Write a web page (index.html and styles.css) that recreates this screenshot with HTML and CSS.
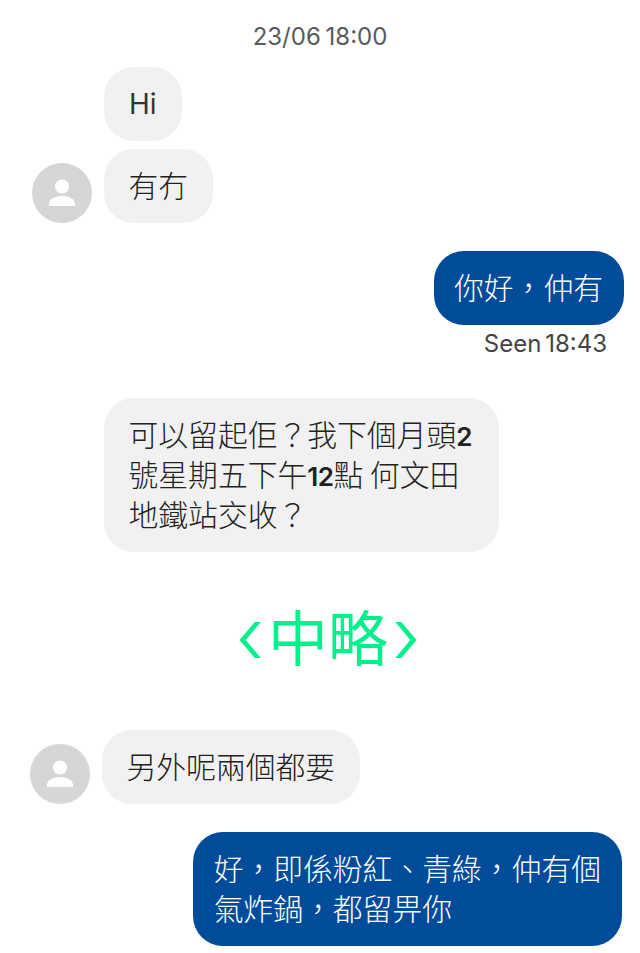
FILE: index.html
```html
<!DOCTYPE html>
<html lang="zh-Hant">
<head>
<meta charset="utf-8">
<title>Chat</title>
<link rel="stylesheet" href="styles.css">
</head>
<body>
<main class="chat">
  <p class="stamp">23/06 18:00</p>
  <section class="group">
    <div class="bubble in latin">Hi</div>
    <div class="row">
      <svg class="avatar" viewBox="0 0 60 60" aria-hidden="true"><circle cx="30" cy="30" r="30" fill="#d6d6d6"/><circle cx="30" cy="23.5" r="7" fill="#fff"/><path d="M17 43v-2c0-5 6-8 13-8s13 3 13 8v2z" fill="#fff"/></svg>
      <div class="bubble in">有冇</div>
    </div>
  </section>
  <section class="group-out">
    <div class="bubble out">你好&#xFF0C;仲有</div>
    <p class="seen">Seen 18:43</p>
  </section>
  <section class="long">
    <div class="bubble in wide">可以留起佢&#xFF1F;我下個月頭<b>2</b><br>號星期五下午<b>12</b>點 何文田<br>地鐵站交收&#xFF1F;</div>
  </section>
  <div class="omit"><span class="chev">‹</span><span class="omit-text">中略</span><span class="chev">›</span></div>
  <section class="group-in2">
    <div class="row">
      <svg class="avatar" viewBox="0 0 60 60" aria-hidden="true"><circle cx="30" cy="30" r="30" fill="#d6d6d6"/><circle cx="30" cy="23.5" r="7" fill="#fff"/><path d="M17 43v-2c0-5 6-8 13-8s13 3 13 8v2z" fill="#fff"/></svg>
      <div class="bubble in">另外呢兩個都要</div>
    </div>
  </section>
  <section class="group-out2">
    <div class="bubble out">好&#xFF0C;即係粉紅、青綠&#xFF0C;仲有個<br>氣炸鍋&#xFF0C;都留畀你</div>
  </section>
</main>
</body>
</html>
```
FILE: styles.css
```css
html, body {
  margin: 0;
  padding: 0;
  background: #fff;
}
.chat {
  display: flex;
  flex-direction: column;
  font-family: "Noto Sans CJK TC", sans-serif;
  font-weight: 300;
  font-size: 29.8px;
  line-height: 40px;
  color: #222;
}
.stamp {
  margin: 20px 0 13px;
  text-align: center;
  font-family: Inter, sans-serif;
  font-weight: 400;
  font-size: 24px;
  line-height: 34px;
  color: #5a5a5a;
  word-spacing: -2px;
}
.group {
  display: flex;
  flex-direction: column;
  gap: 8px;
  align-items: flex-start;
  padding-left: 32px;
}
.group > .bubble {
  margin-left: 72px;
}
.row {
  display: flex;
  align-items: flex-end;
  gap: 12px;
}
.avatar {
  width: 60px;
  height: 60px;
  flex: none;
}
.bubble {
  padding: 15px 25px 19px 24.5px;
  border-radius: 30px;
  white-space: nowrap;
}
.bubble b {
  font-family: Inter, sans-serif;
  font-size: 26px;
  font-weight: 600;
  line-height: 1;
  letter-spacing: -0.5px;
}
.wide {
  padding-right: 27px;
}
.latin {
  font-family: Inter, sans-serif;
  font-size: 28px;
  font-weight: 400;
  color: #333;
  padding: 17px 25px;
}
.in {
  background: #f1f1f1;
}
.out {
  background: #004c9b;
  color: #fff;
  padding-left: 20.5px;
  padding-right: 21px;
}
.group-out {
  display: flex;
  flex-direction: column;
  align-items: flex-end;
  margin-top: 28px;
  padding-right: 16px;
}
.seen {
  margin: 0;
  padding-right: 17px;
  font-family: Inter, sans-serif;
  font-weight: 400;
  font-size: 24px;
  line-height: 38px;
  color: #444;
  word-spacing: -3px;
}
.long {
  display: flex;
  margin-top: 35px;
  padding-left: 104px;
}
.omit {
  height: 178px;
  display: flex;
  align-items: center;
  justify-content: center;
  gap: 4px;
  color: #00f08c;
  padding: 0 0 12px 16px;
  box-sizing: border-box;
}
.omit-text {
  font-size: 60px;
  font-weight: 400;
  line-height: 60px;
}
.chev {
  font-family: Inter, sans-serif;
  font-size: 78px;
  font-weight: 300;
  line-height: 60px;
}
.group-in2 {
  display: flex;
  padding-left: 30px;
}
.group-out2 {
  display: flex;
  justify-content: flex-end;
  margin-top: 28px;
  padding-right: 18px;
}
```
